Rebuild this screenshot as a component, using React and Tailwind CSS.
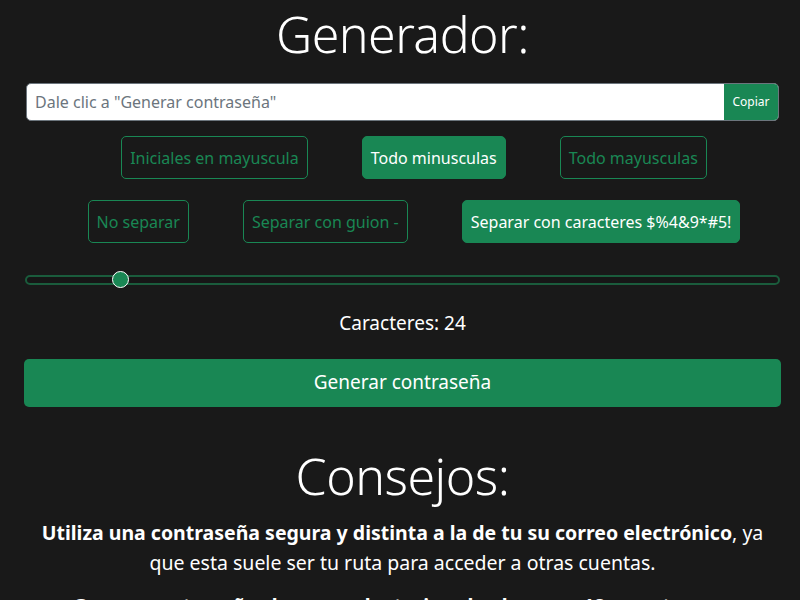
import React, { useState } from 'react'

const font = { fontFamily: '"Noto Sans", "Open Sans", sans-serif' }

function OptionButton({ label, active, onClick }) {
  return (
    <button
      onClick={onClick}
      className={
        'h-[43px] px-[8px] rounded-[5px] border text-[16px] leading-none whitespace-nowrap ' +
        (active
          ? 'bg-[#198754] border-[#198754] text-white'
          : 'bg-transparent border-[#198754] text-[#198754]')
      }
    >
      {label}
    </button>
  )
}

export default function App() {
  const [caseMode, setCaseMode] = useState('lower')
  const [sepMode, setSepMode] = useState('chars')
  const [length, setLength] = useState(24)

  const pct = (length - 10) / (129 - 10)

  return (
    <div className="min-h-[600px] bg-[#191919] text-white overflow-hidden" style={font}>
      <div className="pl-[24px] pr-[19px] pt-[2px]">
        <h1 className="text-center text-[50px] font-light leading-[65px] tracking-[-0.5px]">Generador:</h1>

        <div className="mt-[16px] mx-[2px] flex h-[38px] rounded-[5px] overflow-hidden border border-[#6c757d] bg-white">
          <input
            readOnly
            placeholder='Dale clic a "Generar contraseña"'
            className="flex-1 px-[8px] text-[16px] text-[#212529] placeholder:text-[#6c757d] outline-none"
          />
          <button className="w-[54px] bg-[#198754] text-white text-[12px]">Copiar</button>
        </div>

        <div className="mt-[15px] flex justify-center gap-[54px] pl-[23px]">
          <OptionButton label="Iniciales en mayuscula" active={caseMode === 'initials'} onClick={() => setCaseMode('initials')} />
          <OptionButton label="Todo minusculas" active={caseMode === 'lower'} onClick={() => setCaseMode('lower')} />
          <OptionButton label="Todo mayusculas" active={caseMode === 'upper'} onClick={() => setCaseMode('upper')} />
        </div>

        <div className="mt-[21px] flex justify-center gap-[54px] pl-[23px]">
          <OptionButton label="No separar" active={sepMode === 'none'} onClick={() => setSepMode('none')} />
          <OptionButton label="Separar con guion -" active={sepMode === 'dash'} onClick={() => setSepMode('dash')} />
          <OptionButton label="Separar con caracteres $%4&9*#5!" active={sepMode === 'chars'} onClick={() => setSepMode('chars')} />
        </div>

        <div className="mt-[31px] mx-[1px] relative h-[12px]">
          <div className="absolute inset-x-0 top-[1px] h-[10px] rounded-full border-[2px] border-[#1a5c3c] bg-[#161616]" />
          <div
            className="absolute top-[-3px] w-[17px] h-[17px] rounded-full bg-[#198754] border-[1.5px] border-white"
            style={{ left: `calc(${pct} * (100% - 17px))` }}
          />
        </div>

        <p className="mt-[23px] text-center text-[19px]">Caracteres: {length}</p>

        <button
          onClick={() => setLength(length)}
          className="mt-[21px] w-full h-[48px] rounded-[5px] bg-[#198754] text-white text-[19px]"
        >
          Generar contraseña
        </button>

        <h2 className="mt-[37px] text-center text-[50px] font-light leading-[65px] tracking-[-0.5px]">Consejos:</h2>

        <p className="mt-[9px] text-center text-[19.5px] leading-[30px] px-[8px]">
          <b>Utiliza una contraseña segura y distinta a la de tu su correo electrónico</b>, ya que esta suele ser tu ruta para acceder a otras cuentas.
        </p>
        <p className="mt-[13px] text-center text-[19.5px] leading-[30px] px-[8px]">
          <b>Genera contraseñas largas y aleatorias, de al menos 12 caracteres</b>, y cámbialas con frecuencia.
        </p>
      </div>
    </div>
  )
}
